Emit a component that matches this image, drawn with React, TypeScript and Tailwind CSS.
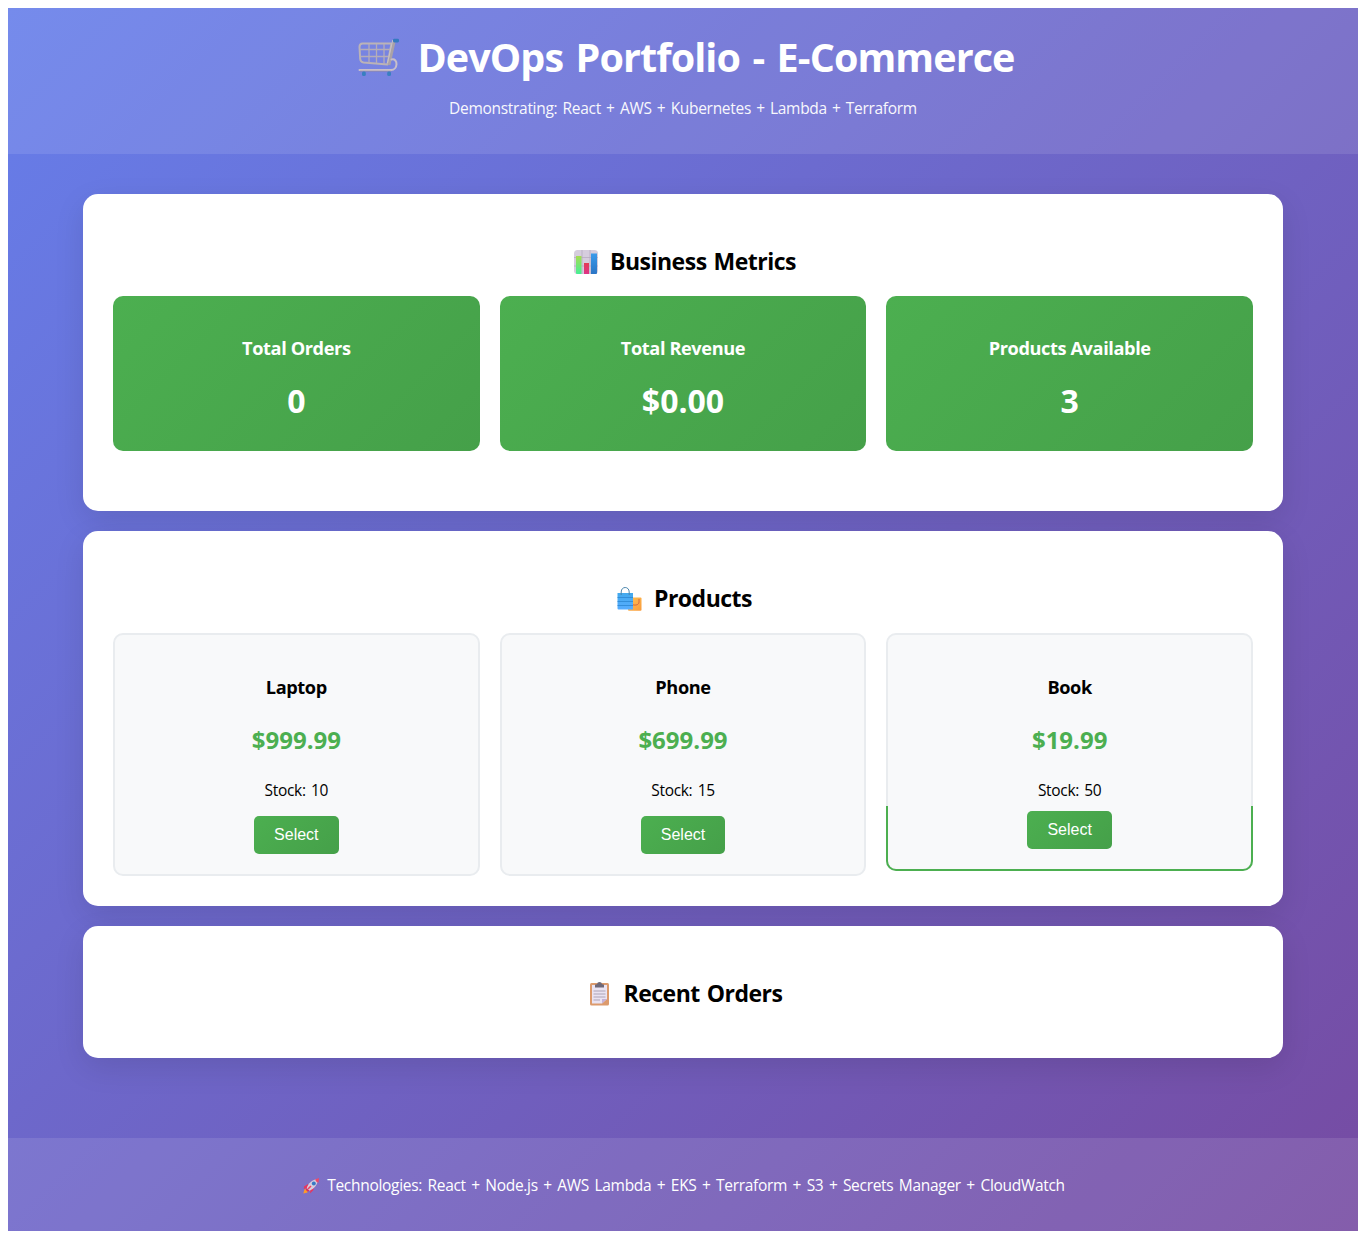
import type { ReactNode } from "react";

function CartIcon() {
  return (
    <svg className="h-[40px] w-[42px]" viewBox="0 0 42 40" fill="none">
      <path d="M4.500 6.500H33.500L29.500 27.500L5.500 25.500Q2.500 25 2.200 22L1.500 10Q1.500 6.500 4.500 6.500Z" stroke="#bbb3b7" strokeWidth="2" strokeLinejoin="round" />
      <path d="M11 7V26M18.500 7V26M26 7V27M2 12.500H32M2.500 19.500H30.500" stroke="#b5adb8" strokeWidth="1.300" />
      <path d="M36.500 3L31 28" stroke="#aaa2a6" strokeWidth="2.800" />
      <path d="M34.800 3L29.500 26" stroke="#cbc4c5" strokeWidth="0.900" />
      <path d="M33.500 22.500C40.500 21 40 33 33 33H1.500" stroke="#c9bfc9" strokeWidth="2" strokeLinecap="round" />
      <path d="M2 34.200H33" stroke="#968ba0" strokeWidth="0.700" />
      <rect x="35" y="1.800" width="6" height="3.600" rx="1.300" fill="#347ac0" />
      <rect x="4" y="34.500" width="3.800" height="4.500" rx="1.500" fill="#397fc1" />
      <rect x="29.200" y="34.500" width="3.800" height="4.500" rx="1.500" fill="#397fc1" />
    </svg>
  );
}

function ChartIcon() {
  return (
    <svg className="h-[24px] w-[24px]" viewBox="0 0 24 24">
      <defs>
        <linearGradient id="green" x2="0" y2="1"><stop stopColor="#a6dc51" /><stop offset="1" stopColor="#45ef96" /></linearGradient>
        <linearGradient id="red" x2="0" y2="1"><stop stopColor="#e33c55" /><stop offset="1" stopColor="#de3389" /></linearGradient>
        <linearGradient id="blue" x2="0" y2="1"><stop stopColor="#3b9bea" /><stop offset="1" stopColor="#2b75c5" /></linearGradient>
      </defs>
      <rect width="24" height="24" rx="3.500" fill="#d6cddd" />
      <path d="M8 0V24M16 0V24M0 7.500H24M0 16H24" stroke="#b3a8bd" strokeWidth="0.700" />
      <path d="M2 6H7.500V24H3Q2 24 2 23Z" fill="url(#green)" />
      <path d="M10 13H15V24H10Z" fill="url(#red)" />
      <path d="M17 3.500H23V23Q23 24 22 24H17Z" fill="url(#blue)" />
    </svg>
  );
}

function BagsIcon() {
  return (
    <svg className="h-[24px] w-[25px]" viewBox="0 0 25 24" fill="none">
      <defs>
        <linearGradient id="bag" x2="0" y2="1"><stop stopColor="#42a9ed" /><stop offset="1" stopColor="#57adff" /></linearGradient>
        <linearGradient id="small" x2="1" y2="1"><stop stopColor="#ffc153" /><stop offset="1" stopColor="#f99b3c" /></linearGradient>
      </defs>
      <rect x="11" y="10.500" width="13.500" height="13.200" rx="1" fill="url(#small)" />
      <path d="M22 12V15C22 18 18.500 18.500 16 17.800" stroke="#d76840" strokeWidth="1" />
      <path d="M0.500 6H16V22.500H1.500Q0.500 22.500 0.500 21.500Z" fill="url(#bag)" />
      <path d="M0.500 10.500H16M0.500 14.500H16M0.500 18.500H16" stroke="#2c86d2" strokeWidth="0.800" />
      <path d="M4.200 8V5C4.200 -1 12.200 -1 12.200 5V8" stroke="#4a85ac" strokeWidth="1" />
    </svg>
  );
}

function ClipboardIcon() {
  return (
    <svg className="h-[24px] w-[19px]" viewBox="0 0 19 24">
      <rect y="1" width="19" height="22.500" rx="1.500" fill="#dc9a6c" />
      <path d="M2 3H17V17L12 21.500H2Z" fill="#eae3f2" />
      <path d="M12 21.500V17H17Z" fill="#c5b1d6" />
      <path d="M5 5.500V3.200Q5 2.300 6 2.300H7Q7.300 0 9.500 0Q11.700 0 12 2.300H13Q14 2.300 14 3.200V5.500Z" fill="#6e6878" />
      <path d="M3.500 9H15.500M3.500 12H15.500M3.500 15H15.500M3.500 18H10" stroke="#ada4b7" strokeWidth="1" />
    </svg>
  );
}

function RocketIcon() {
  return (
    <svg className="h-[16px] w-[17px]" viewBox="0 0 17 16">
      <path d="M5 6L1 8.500L0.800 11L5 9.500ZM7.500 11.500L7 15.500L10.500 12V9Z" fill="#e8365e" />
      <path d="M4.500 11L1.500 11.300L0.300 15.500L4.500 14.500Z" fill="#ff9b29" />
      <path d="M3.500 11C5 5 9.500 1.500 14.800 1C15.200 6 11 11 6 13Z" fill="#d7cddd" />
      <path d="M12 1.500L16 0L15.500 4.700Q13 4.200 12 1.500Z" fill="#ee4767" />
      <path d="M3.500 10L6.800 13L4.500 13.500L2.800 12Z" fill="#d92f61" />
      <circle cx="10.800" cy="5.500" r="2" fill="#367ac5" />
      <path d="M5 11L8 8" stroke="#ef4265" strokeWidth="1.600" />
    </svg>
  );
}

function Panel({ icon, title, gap, className, children }: { icon: ReactNode; title: string; gap: string; className: string; children?: ReactNode }) {
  return (
    <section className={`rounded-[15px] bg-white px-[30px] pt-[52px] shadow-[0_10px_30px_rgba(0,0,0,0.1)] ${className}`}>
      <h2 className={`flex h-[32px] items-center justify-center text-[23px] leading-[30px] font-bold whitespace-nowrap ${gap}`}>
        <span className="-mt-[1px]">{icon}</span>
        <span className="-mt-[2px] tracking-[-0.5px] [word-spacing:1.5px]">{title}</span>
      </h2>
      {children}
    </section>
  );
}

const metrics = [
  { label: "Total Orders", value: "0" },
  { label: "Total Revenue", value: "$0.00" },
  { label: "Products Available", value: "3" },
];

const products = [
  { name: "Laptop", price: "$999.99", stock: 10, active: false },
  { name: "Phone", price: "$699.99", stock: 15, active: false },
  { name: "Book", price: "$19.99", stock: 50, active: true },
];

export default function App() {
  return (
    <div className="bg-white p-2 font-['Open_Sans','Noto_Sans',sans-serif] text-black">
      <div className="flex h-[1223px] flex-col bg-[linear-gradient(135deg,#667eea_0%,#764ba2_100%)] text-center">
        <header className="h-[146px] bg-white/10 pt-[22px] text-white">
          <h1 className="flex h-[54px] items-center justify-center gap-[17px] pl-[7px] text-[39.5px] leading-[54px] font-bold whitespace-nowrap">
            <CartIcon />
            <span className="-mt-[1px] tracking-[-0.9px] [word-spacing:3px]">DevOps Portfolio - E-Commerce</span>
          </h1>
          <p className="mt-[14px] text-[15.5px] leading-[21px] tracking-[-0.3px] opacity-95 [word-spacing:1.5px]">Demonstrating: React + AWS + Kubernetes + Lambda + Terraform</p>
        </header>

        <main className="mx-auto flex w-[1200px] flex-1 flex-col gap-5 pt-10">
          <Panel icon={<ChartIcon />} title="Business Metrics" gap="gap-[12px] pl-[4px]" className="h-[317px]">
            <div className="mt-[18px] grid grid-cols-3 gap-5">
              {metrics.map((m) => (
                <div key={m.label} className="h-[155px] rounded-[10px] bg-[linear-gradient(135deg,#4CAF50,#45a049)] pt-[40px] font-bold text-white">
                  <h3 className="text-[18.2px] leading-[25px] tracking-[-0.4px]">{m.label}</h3>
                  <p className="mt-[18px] text-[32px] leading-[43px]">{m.value}</p>
                </div>
              ))}
            </div>
          </Panel>

          <Panel icon={<BagsIcon />} title="Products" gap="gap-[12px] pl-[3px]" className="h-[375px]">
            <div className="mt-[18px] grid grid-cols-3 items-start gap-5">
              {products.map((p) => (
                <div key={p.name} className={`relative rounded-[10px] border-2 border-[#e9ecef] bg-[#f8f9fa] pt-[40px] ${p.active ? "h-[238px]" : "h-[243px]"}`}>
                  <h3 className="text-[18.2px] leading-[25px] font-bold tracking-[-0.4px]">{p.name}</h3>
                  <p className="mt-[24px] text-[24px] leading-[32px] font-bold text-[#4CAF50]">{p.price}</p>
                  <p className="mt-[24px] text-[15.5px] leading-[21px] tracking-[-0.3px] [word-spacing:1.5px]">Stock: {p.stock}</p>
                  <button className={`relative z-10 h-[38px] w-[84.5px] rounded-[5px] bg-[linear-gradient(135deg,#4CAF50,#45a049)] font-['Liberation_Sans',Arial,sans-serif] text-[16px] leading-[38px] text-white ${p.active ? "mt-[10px]" : "mt-[15px]"}`}>
                    Select
                  </button>
                  {p.active && <div className="absolute -inset-x-[2px] -bottom-[2px] h-[65px] rounded-b-[10px] border-x-2 border-b-2 border-[#4CAF50]" />}
                </div>
              ))}
            </div>
          </Panel>

          <Panel icon={<ClipboardIcon />} title="Recent Orders" gap="gap-[14px] pl-[7px]" className="h-[132px]" />
        </main>

        <footer className="flex h-[93px] items-center justify-center gap-[7px] bg-white/10 pt-[2px] pl-[2px] text-[15.5px] leading-[21px] text-white">
          <RocketIcon />
          <p className="tracking-[-0.3px] [word-spacing:1.75px]">Technologies: React + Node.js + AWS Lambda + EKS + Terraform + S3 + Secrets Manager + CloudWatch</p>
        </footer>
      </div>
    </div>
  );
}
